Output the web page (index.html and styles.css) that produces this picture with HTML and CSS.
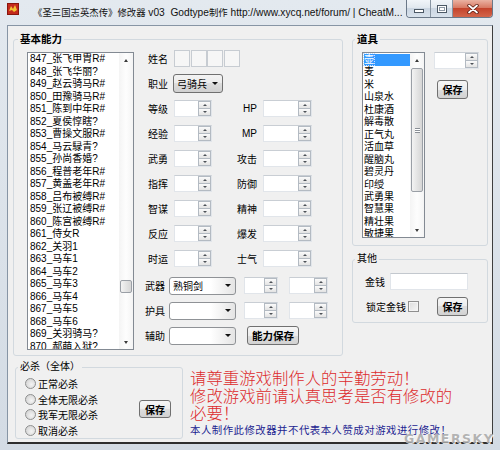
FILE: index.html
```html
<!DOCTYPE html>
<html>
<head>
<meta charset="utf-8">
<link rel="stylesheet" href="styles.css">
</head>
<body>
<div class="window">
  <div class="titlebar">
    <svg class="app-icon" viewBox="0 0 12 12" width="12" height="12">
      <rect x="0" y="0" width="12" height="12" fill="#c42a1c"/>
      <rect x="0.5" y="0.5" width="11" height="11" fill="none" stroke="#8a160c" stroke-width="1"/>
      <path d="M2 8 L4 3 L6 6 L8 2 L10 7 L7 9 L5 7 Z" fill="#f2c431"/>
    </svg>
    <div class="title"><span class="tc">《圣三国志英杰传》修改器</span> v03&nbsp; Godtype<span class="tc">制作</span> http://www.xycq.net/forum/ | CheatM...</div>
    <div class="caption-btns">
      <div class="cb cb-min"><span class="min-glyph"></span></div>
      <div class="cb cb-max"><span class="max-glyph"></span></div>
      <div class="cb cb-close">
        <svg viewBox="0 0 12 10" width="12" height="10">
          <path d="M2 1.5 L10 8.5 M10 1.5 L2 8.5" stroke="#5a1a10" stroke-width="3.4" stroke-linecap="round"/>
          <path d="M2 1.5 L10 8.5 M10 1.5 L2 8.5" stroke="#ffffff" stroke-width="1.8" stroke-linecap="round"/>
        </svg>
      </div>
    </div>
  </div>

  <div class="client">
    <div class="top-row">
      <fieldset class="group group-basic">
        <legend class="lg-bold">基本能力</legend>
        <div class="basic-body">
          <div class="listbox list-chars">
            <div class="list-items">
              <div>847_张飞甲胄R#</div>
              <div>848_张飞华丽?</div>
              <div>849_赵云骑马R#</div>
              <div>850_田豫骑马R#</div>
              <div>851_陈到中年R#</div>
              <div>852_夏侯惇瞎?</div>
              <div>853_曹操文服R#</div>
              <div>854_马云騄青?</div>
              <div>855_孙尚香婚?</div>
              <div>856_程普老年R#</div>
              <div>857_黄盖老年R#</div>
              <div>858_吕布被缚R#</div>
              <div>859_张辽被缚R#</div>
              <div>860_陈宫被缚R#</div>
              <div>861_侍女R</div>
              <div>862_关羽1</div>
              <div>863_马车1</div>
              <div>864_马车2</div>
              <div>865_马车3</div>
              <div>866_马车4</div>
              <div>867_马车5</div>
              <div>868_马车6</div>
              <div>869_关羽骑马?</div>
              <div>870_郝萌入狱?</div>
            </div>
            <div class="vscroll">
              <div class="sb-btn sb-up"></div>
              <div class="sb-track"><div class="sb-thumb thumb-chars"></div></div>
              <div class="sb-btn sb-down"></div>
            </div>
          </div>

          <div class="form">
            <div class="frow">
              <span class="lbl">姓名</span>
              <div class="namebox"><span></span><span></span><span></span><span></span></div>
            </div>
            <div class="frow">
              <span class="lbl">职业</span>
              <div class="ddl"><span>弓骑兵</span><i class="arr"></i></div>
            </div>
            <div class="frow">
              <span class="lbl">等级</span>
              <div class="spin s-l"><span class="spin-edit"></span><span class="spin-btns"><i class="up"></i><i class="dn"></i></span></div>
              <span class="lbl-r">HP</span>
              <div class="spin s-r"><span class="spin-edit"></span><span class="spin-btns"><i class="up"></i><i class="dn"></i></span></div>
            </div>
            <div class="frow">
              <span class="lbl">经验</span>
              <div class="spin s-l"><span class="spin-edit"></span><span class="spin-btns"><i class="up"></i><i class="dn"></i></span></div>
              <span class="lbl-r">MP</span>
              <div class="spin s-r"><span class="spin-edit"></span><span class="spin-btns"><i class="up"></i><i class="dn"></i></span></div>
            </div>
            <div class="frow">
              <span class="lbl">武勇</span>
              <div class="spin s-l"><span class="spin-edit"></span><span class="spin-btns"><i class="up"></i><i class="dn"></i></span></div>
              <span class="lbl-r">攻击</span>
              <div class="spin s-r"><span class="spin-edit"></span><span class="spin-btns"><i class="up"></i><i class="dn"></i></span></div>
            </div>
            <div class="frow">
              <span class="lbl">指挥</span>
              <div class="spin s-l"><span class="spin-edit"></span><span class="spin-btns"><i class="up"></i><i class="dn"></i></span></div>
              <span class="lbl-r">防御</span>
              <div class="spin s-r"><span class="spin-edit"></span><span class="spin-btns"><i class="up"></i><i class="dn"></i></span></div>
            </div>
            <div class="frow">
              <span class="lbl">智谋</span>
              <div class="spin s-l"><span class="spin-edit"></span><span class="spin-btns"><i class="up"></i><i class="dn"></i></span></div>
              <span class="lbl-r">精神</span>
              <div class="spin s-r"><span class="spin-edit"></span><span class="spin-btns"><i class="up"></i><i class="dn"></i></span></div>
            </div>
            <div class="frow">
              <span class="lbl">反应</span>
              <div class="spin s-l"><span class="spin-edit"></span><span class="spin-btns"><i class="up"></i><i class="dn"></i></span></div>
              <span class="lbl-r">爆发</span>
              <div class="spin s-r"><span class="spin-edit"></span><span class="spin-btns"><i class="up"></i><i class="dn"></i></span></div>
            </div>
            <div class="frow">
              <span class="lbl">时运</span>
              <div class="spin s-l"><span class="spin-edit"></span><span class="spin-btns"><i class="up"></i><i class="dn"></i></span></div>
              <span class="lbl-r">士气</span>
              <div class="spin s-r"><span class="spin-edit"></span><span class="spin-btns"><i class="up"></i><i class="dn"></i></span></div>
            </div>
            <div class="frow eq eq-first">
              <span class="lbl2">武器</span>
              <div class="combo"><span>熟铜剑</span><i class="arr"></i></div>
              <div class="spin s-a"><span class="spin-edit"></span><span class="spin-btns"><i class="up"></i><i class="dn"></i></span></div>
              <div class="spin s-b"><span class="spin-edit"></span><span class="spin-btns"><i class="up"></i><i class="dn"></i></span></div>
            </div>
            <div class="frow eq">
              <span class="lbl2">护具</span>
              <div class="combo"><span></span><i class="arr"></i></div>
              <div class="spin s-a"><span class="spin-edit"></span><span class="spin-btns"><i class="up"></i><i class="dn"></i></span></div>
              <div class="spin s-b"><span class="spin-edit"></span><span class="spin-btns"><i class="up"></i><i class="dn"></i></span></div>
            </div>
            <div class="frow eq">
              <span class="lbl2">辅助</span>
              <div class="combo"><span></span><i class="arr"></i></div>
              <div class="btn btn-ability">能力保存</div>
            </div>
          </div>
        </div>
      </fieldset>

      <div class="right-col">
        <fieldset class="group group-items">
          <legend class="lg-bold">道具</legend>
          <div class="items-body">
            <div class="listbox list-items2">
              <div class="list-items">
                <div class="sel"><span>壶</span></div>
                <div>麦</div>
                <div>米</div>
                <div>山泉水</div>
                <div>杜康酒</div>
                <div>解毒散</div>
                <div>正气丸</div>
                <div>活血草</div>
                <div>醒脑丸</div>
                <div>碧灵丹</div>
                <div>印绶</div>
                <div>武勇果</div>
                <div>智慧果</div>
                <div>精壮果</div>
                <div>敏捷果</div>
              </div>
              <div class="vscroll">
                <div class="sb-btn sb-up"></div>
                <div class="sb-track"><div class="sb-thumb thumb-items"><span class="grip"></span></div></div>
                <div class="sb-btn sb-down"></div>
              </div>
            </div>
            <div class="items-side">
              <div class="spin s-item"><span class="spin-edit"></span><span class="spin-btns"><i class="up"></i><i class="dn"></i></span></div>
              <div class="btn btn-save btn-save-items">保存</div>
            </div>
          </div>
        </fieldset>

        <fieldset class="group group-other">
          <legend>其他</legend>
          <div class="other-row1">
            <span class="lbl-money">金钱</span>
            <div class="textbox"></div>
          </div>
          <div class="other-row2">
            <span class="lbl-lock">锁定金钱</span>
            <span class="checkbox"></span>
            <div class="btn btn-save btn-save-other">保存</div>
          </div>
        </fieldset>
      </div>
    </div>

    <div class="bottom-row">
      <fieldset class="group group-kill">
        <legend>必杀（全体）</legend>
        <div class="kill-body">
          <div class="radios">
            <div class="radio-row"><span class="radio"></span>正常必杀</div>
            <div class="radio-row"><span class="radio"></span>全体无限必杀</div>
            <div class="radio-row"><span class="radio"></span>我军无限必杀</div>
            <div class="radio-row"><span class="radio"></span>取消必杀</div>
          </div>
          <div class="btn btn-save btn-save-kill">保存</div>
        </div>
      </fieldset>
      <div class="notice">
        <div class="notice-red">请尊重游戏制作人的辛勤劳动！<br>修改游戏前请认真思考是否有修改的<br>必要！</div>
        <div class="notice-blue">本人制作此修改器并不代表本人赞成对游戏进行修改！</div>
      </div>
    </div>
    <div class="watermark">GAMERSKY</div>
  </div>
</div>
</body>
</html>
```

FILE: styles.css
```css
* { box-sizing: border-box; }
html, body { margin: 0; padding: 0; }
body {
  width: 500px;
  height: 450px;
  overflow: hidden;
  font-family: "Liberation Sans", "Noto Sans CJK SC", sans-serif;
  font-size: 10px;
  color: #000;
}

.window {
  width: 500px;
  height: 450px;
  display: flex;
  flex-direction: column;
  background: linear-gradient(#e3e9ef, #d3dbe4);
}

/* ---------- title bar ---------- */
.titlebar {
  height: 25px;
  display: flex;
  align-items: flex-start;
  flex: none;
}
.app-icon { margin: 3px 0 0 7px; flex: none; }
.title {
  margin: 6px 0 0 14px;
  font-family: "Liberation Sans", "Noto Sans CJK SC", sans-serif;
  font-size: 10.2px;
  line-height: 13px;
  white-space: nowrap;
  color: #111;
}
.title .tc { font-size: 9.4px; }
.caption-btns {
  margin-left: auto;
  margin-right: 7px;
  display: flex;
  height: 18px;
  border: 1px solid #6a7888;
  border-top: none;
  border-radius: 0 0 4px 4px;
  overflow: hidden;
  flex: none;
}
.cb { display: flex; align-items: center; justify-content: center; }
.cb-min, .cb-max {
  width: 24px;
  background: linear-gradient(#f1f5f9 0%, #e1e8ef 45%, #cbd6e2 50%, #d8e2ec 100%);
  border-right: 1px solid #8895a3;
}
.cb-max { width: 22px; }
.cb-close {
  width: 39px;
  background: linear-gradient(#eab2a2 0%, #d87a64 45%, #c4442c 50%, #d3654a 100%);
}
.min-glyph {
  width: 10px; height: 4px;
  margin-top: 5px;
  background: #fff;
  border: 1px solid #4c5966;
}
.max-glyph {
  width: 10px; height: 8px;
  border: 1px solid #4c5966;
  background: #fff;
  box-shadow: inset 0 0 0 1px #fff, inset 0 0 0 2px #8c98a5;
}

/* ---------- client ---------- */
.client {
  position: relative;
  margin: 0 7px;
  height: 419px;
  flex: none;
  background: #f0f0f0;
  border-top: 1px solid #8795a5;
  border-left: 1px solid #8795a5;
  border-right: 1px solid #3e3e3e;
  border-bottom: 2px solid #2e2e2e;
  padding: 6px 0 0 5px;
}
.top-row { display: flex; align-items: flex-start; }

.group {
  margin: 0;
  padding: 0;
  min-width: 0;
  border: 1px solid #d2d9df;
  border-radius: 3px;
}
.group legend {
  padding: 0 2px;
  margin-left: 2px;
  line-height: 14px;
  height: 14px;
  font-size: 10px;
}
.group legend.lg-bold { font-weight: bold; font-size: 10.5px; }

.group-basic { width: 330px; height: 324px; }
.group-basic legend { margin-left: 4px; }
.basic-body { display: flex; align-items: flex-start; }

/* listbox */
.listbox {
  display: flex;
  background: #fff;
  border: 1px solid #838a93;
  overflow: hidden;
}
.list-chars { margin: 6px 0 0 13px; width: 107px; height: 298px; }
.list-items { flex: 1; overflow: hidden; padding-left: 2px; line-height: 12.5px; white-space: nowrap; }
.vscroll {
  width: 14px;
  flex: none;
  display: flex;
  flex-direction: column;
  background: linear-gradient(90deg, #f4f4f4, #fdfdfd 50%, #f4f4f4);
}
.sb-btn { height: 14px; display: flex; align-items: center; justify-content: center; flex: none; }
.sb-up::after {
  content: "";
  border-left: 2.5px solid transparent;
  border-right: 2.5px solid transparent;
  border-bottom: 3px solid #3a3a3a;
}
.sb-down::after {
  content: "";
  border-left: 2.5px solid transparent;
  border-right: 2.5px solid transparent;
  border-top: 3px solid #3a3a3a;
}
.sb-track { flex: 1; }
.sb-thumb {
  margin: 0 1px;
  border: 1px solid #9a9fa6;
  border-radius: 2px;
  background: linear-gradient(90deg, #f3f3f3, #e4e4e4 50%, #d6d6d6);
  display: flex;
  align-items: center;
  justify-content: center;
}
.thumb-chars { margin-top: 213px; height: 13px; }
.thumb-items { margin-top: 1px; height: 124px; }
.grip {
  width: 5px; height: 5px;
  border-top: 1px solid #8a8f96;
  border-bottom: 1px solid #8a8f96;
  background: linear-gradient(#fff 0, #fff 35%, #8a8f96 35%, #8a8f96 65%, #fff 65%);
}

/* form */
.form { margin-left: 11px; display: flex; flex-direction: column; }
.frow { display: flex; align-items: center; height: 25px; padding-left: 3px; }
.lbl { width: 26px; flex: none; }
.lbl-r { width: 51px; flex: none; text-align: right; padding-right: 6px; }
.lbl2 { width: 24px; flex: none; }
.eq { padding-left: 0; }
.eq-first { margin-top: 2px; }

.namebox { display: flex; gap: 0.6px; }
.namebox span {
  width: 16px; height: 17px;
  border: 1px solid #c7ccd2;
  background: #f6f6f6;
}

.ddl {
  margin-left: -1px;
  width: 50px; height: 19px;
  display: flex; align-items: center;
  padding-left: 3px;
  border: 1px solid #707070;
  border-radius: 3px;
  background: linear-gradient(#f3f3f3 0%, #ebebeb 50%, #dddddd 50%, #d0d0d0 100%);
}
.arr {
  margin-left: auto;
  margin-right: 4px;
  width: 0; height: 0;
  border-left: 3px solid transparent;
  border-right: 3px solid transparent;
  border-top: 3px solid #111;
}

.spin {
  display: flex;
  height: 17px;
  background: #fff;
  border: 1px solid #e1e5ea;
  border-top-color: #c9ced4;
  flex: none;
}
.spin-edit { flex: 1; }
.spin-btns { width: 13px; display: flex; flex-direction: column; flex: none; }
.spin-btns i {
  flex: 1;
  display: flex; align-items: center; justify-content: center;
  border: 1px solid #b3bac2;
  background: linear-gradient(#fbfbfb, #e3e3e3);
}
.spin-btns i + i { border-top: none; }
.spin-btns .up::after {
  content: "";
  border-left: 2px solid transparent;
  border-right: 2px solid transparent;
  border-bottom: 2.5px solid #4c5157;
}
.spin-btns .dn::after {
  content: "";
  border-left: 2px solid transparent;
  border-right: 2px solid transparent;
  border-top: 2.5px solid #4c5157;
}
.s-l { width: 38px; }
.s-r { width: 49px; }
.s-a { width: 34px; margin-left: 8px; }
.s-b { width: 39px; margin-left: 11px; }

.combo {
  width: 67px; height: 18px;
  display: flex; align-items: center;
  padding-left: 3px;
  border: 1px solid #8f9296;
  border-radius: 3px;
  background: linear-gradient(90deg, #fff 0%, #fff 62%, #e4e4e4 100%);
  flex: none;
}

.btn {
  display: flex; align-items: center; justify-content: center;
  border: 1px solid #707070;
  border-radius: 3px;
  background: linear-gradient(#f6f6f6 0%, #ececec 50%, #dedede 50%, #d2d2d2 100%);
  font-weight: bold;
  font-size: 10px;
  flex: none;
}
.btn-ability { margin-left: 11px; width: 52px; height: 19px; font-size: 10.5px; }
.btn-save { width: 31px; height: 19px; }

/* right column */
.right-col { margin-left: 9px; width: 136px; display: flex; flex-direction: column; }
.group-items { width: 136px; height: 214px; }
.items-body { display: flex; align-items: flex-start; margin-top: 6px; }
.list-items2 { margin-left: 9px; width: 63px; height: 186px; }
.list-items2 .list-items { padding-left: 1px; padding-top: 1px; line-height: 12.45px; }
.sel { background: #3399ff; color: #fff; }
.sel span { outline: 1px dotted #c8e0ff; }
.items-side { margin-left: 9px; display: flex; flex-direction: column; }
.s-item { width: 45px; }
.btn-save-items { margin: 11px 0 0 3px; }

.group-other { width: 136px; height: 71px; margin-top: 6px; }
.other-row1 { display: flex; align-items: center; height: 17px; margin-top: 7px; }
.lbl-money { margin-left: 12px; width: 25px; }
.textbox { width: 78px; height: 17px; background: #fff; border: 1px solid #e1e5ea; border-top-color: #c3c8ce; }
.other-row2 { display: flex; align-items: center; height: 19px; margin-top: 7px; }
.lbl-lock { margin-left: 13px; width: 42px; }
.checkbox {
  width: 11px; height: 11px;
  border: 1px solid #8f8f8f;
  background: linear-gradient(135deg, #dcdcdc, #f6f6f6);
  box-shadow: inset 0 0 0 1px #f4f4f4;
}
.btn-save-other { margin-left: 18px; }

/* bottom row */
.bottom-row { display: flex; align-items: flex-start; margin: 4px 0 0 2px; }
.group-kill { width: 168px; height: 79px; }
.kill-body { display: flex; align-items: flex-start; }
.radios { margin: 2px 0 0 9px; display: flex; flex-direction: column; }
.radio-row { height: 15.5px; display: flex; align-items: center; white-space: nowrap; }
.radio {
  width: 11px; height: 11px;
  margin-right: 2px;
  border-radius: 50%;
  border: 1px solid #8e8f8f;
  background: radial-gradient(circle at 60% 60%, #f4f4f4 0%, #dcdcdc 60%, #cfcfcf 100%);
  flex: none;
}
.btn-save-kill { margin: 26px 11px 0 auto; width: 32px; height: 18px; }

.notice { margin: 9px 0 0 7px; }
.notice-red {
  font-family: "Noto Sans CJK SC", sans-serif;
  font-weight: 300;
  font-size: 16.4px;
  line-height: 17.5px;
  color: #dd2a2c;
  white-space: nowrap;
}
.notice-blue {
  margin-top: 1px;
  font-family: "Noto Sans CJK SC", sans-serif;
  font-size: 10.4px;
  letter-spacing: 0.5px;
  line-height: 13px;
  color: #1c2490;
  white-space: nowrap;
}

.watermark {
  position: absolute;
  left: 396px;
  top: 407px;
  font-family: "DejaVu Sans", sans-serif;
  font-weight: bold;
  font-size: 12.5px;
  line-height: 12px;
  letter-spacing: 1.5px;
  color: #a9a9a9;
  text-shadow: 0 0 1px #fff, 1px 1px 0 #fff;
  opacity: 0.85;
}
```
